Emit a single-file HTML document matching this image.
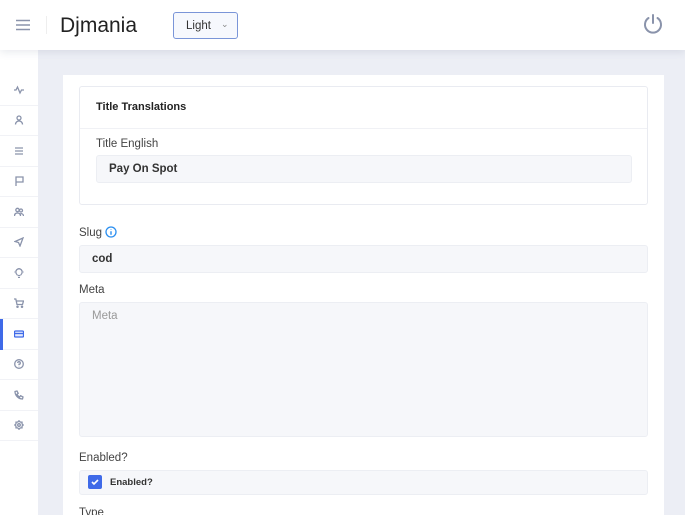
<!DOCTYPE html>
<html style="width:685px;height:515px;overflow:hidden"><head><style>
*{box-sizing:border-box;margin:0;padding:0}
body{width:685px;height:515px;overflow:hidden;background:#eceef5;font-family:"Liberation Sans",sans-serif;color:#343a40;position:relative}
.hdr{position:absolute;left:0;top:0;width:685px;height:50px;background:#fff;box-shadow:0 2px 8px rgba(60,70,110,.12);z-index:2}
.side{position:absolute;left:0;top:50px;width:38px;height:465px;background:#fff}
.it{position:absolute;left:0;width:38px;height:30.5px;border-bottom:1px solid #f1f2f6;display:flex;align-items:center;justify-content:center}
.it svg{width:10px;height:10px;fill:none;stroke:#8a93ab;stroke-width:1.3}
.card{position:absolute;left:63px;top:75px;width:601px;height:440px;background:#fff;overflow:hidden}
.box{position:absolute;left:16px;top:11px;width:569px;height:119px;border:1px solid #e9ebf1;border-radius:3px}
.lbl{position:absolute;font-size:11.5px;color:#444}
.inp{position:absolute;background:#f6f7fa;border:1px solid #eceef3;border-radius:3px;font-size:11.5px;font-weight:bold;color:#333;padding-left:12px;display:flex;align-items:center}
</style></head><body>
<div class="hdr">
 <svg style="position:absolute;left:15px;top:19px" width="16" height="12"><path d="M1 1.5h14M1 6h14M1 10.5h14" stroke="#8a93ab" stroke-width="1.6"/></svg>
 <div style="position:absolute;left:46px;top:16px;width:1px;height:18px;background:#eee"></div>
 <div style="position:absolute;left:60px;top:14px;font-size:21px;color:#222">Djmania</div>
 <div style="position:absolute;left:173px;top:12px;width:65px;height:27px;border:1px solid #7a95d8;border-radius:3px;background:#f6f8fd;font-size:11.5px;color:#333;padding:7px 0 0 12px">Light<span style="position:absolute;left:47px;top:6px;font-size:9px;color:#888">&#8964;</span></div>
 <svg style="position:absolute;left:642px;top:13px" width="22" height="22" viewBox="0 0 22 22"><path d="M6.5 5a8 8 0 1 0 9 0" fill="none" stroke="#8a93ab" stroke-width="2" stroke-linecap="round"/><path d="M11 2v8" stroke="#8a93ab" stroke-width="2" stroke-linecap="round"/></svg>
</div>
<div class="side">
 <div class="it" style="top:25px"><svg viewBox="0 0 10 10"><path d="M0 5h2l1.5-3 2.5 6 1.5-3h2.5"/></svg></div>
 <div class="it" style="top:55.5px"><svg viewBox="0 0 10 10"><circle cx="5" cy="3" r="2"/><path d="M1.5 9.5c0-2 1.5-3.5 3.5-3.5s3.5 1.5 3.5 3.5"/></svg></div>
 <div class="it" style="top:86px"><svg viewBox="0 0 10 10"><path d="M1 2h8M1 5h8M1 8h8"/></svg></div>
 <div class="it" style="top:116.5px"><svg viewBox="0 0 10 10"><path d="M2 10V1h7v5H2"/></svg></div>
 <div class="it" style="top:147px"><svg viewBox="0 0 10 10"><circle cx="3.5" cy="3" r="1.7"/><circle cx="7" cy="3.5" r="1.5"/><path d="M0.5 9c0-2 1.3-3 3-3s3 1 3 3M6.5 6.5c1.8 0 3 1 3 2.5"/></svg></div>
 <div class="it" style="top:177.5px"><svg viewBox="0 0 10 10"><path d="M9 1L1 4.5l3.5 1L6 9z"/></svg></div>
 <div class="it" style="top:208px"><svg viewBox="0 0 10 10"><path d="M3.5 7.5h3M4 9.5h2M3.3 7c-1-1-1.5-1.7-1.5-3a3.2 3.2 0 0 1 6.4 0c0 1.3-.5 2-1.5 3M5 0v.5M0 4h.5M9.5 4h.5"/></svg></div>
 <div class="it" style="top:238.5px"><svg viewBox="0 0 10 10"><path d="M0 1h1.8l1.2 5.5h5.5L9.5 3H2.5"/><circle cx="3.5" cy="8.7" r=".6"/><circle cx="8" cy="8.7" r=".6"/></svg></div>
 <div class="it" style="top:269px"><div style="position:absolute;left:0;top:0;width:3px;height:30.5px;background:#3f6ae8"></div><svg viewBox="0 0 10 10" style="stroke:#3f6ae8;fill:#e3eafd"><rect x="0.5" y="2" width="9" height="6" rx="1"/><path d="M0.5 4.5h9"/></svg></div>
 <div class="it" style="top:299.5px"><svg viewBox="0 0 10 10"><circle cx="5" cy="5" r="4.3"/><path d="M3.7 4a1.3 1.3 0 1 1 1.3 1.3V6.3M5 7.5v.3"/></svg></div>
 <div class="it" style="top:330px"><svg viewBox="0 0 10 10"><path d="M1 1.5L3 1l1.2 2.3-1.3 1c.6 1.2 1.5 2 2.7 2.7l1-1.3L9 7l-.5 2C4.5 9 1 5.5 1 1.5z"/></svg></div>
 <div class="it" style="top:360.5px"><svg viewBox="0 0 10 10"><path d="M5 .8l1.3 1.3h1.7v1.7L9.2 5 8 6.2v1.7H6.3L5 9.2 3.7 7.9H2V6.2L.8 5 2 3.8V2.1h1.7z"/><circle cx="5" cy="5" r="1.3"/></svg></div>
</div>
<div class="card">
 <div class="box">
  <div style="position:absolute;left:0;top:0;width:567px;height:42px;border-bottom:1px solid #f0f1f5;font-size:11px;font-weight:bold;padding:14px 0 0 16px;color:#222">Title Translations</div>
  <div class="lbl" style="left:16px;top:51px">Title English</div>
  <div class="inp" style="left:16px;top:68px;width:536px;height:28px">Pay On Spot</div>
 </div>
 <div class="lbl" style="left:16px;top:152px">Slug</div>
 <svg style="position:absolute;left:42px;top:151px" width="12" height="12" viewBox="0 0 12 12"><circle cx="6" cy="6" r="5" fill="none" stroke="#2b8ff0" stroke-width="1.3"/><path d="M6 5.3v3.5M6 3.3v.4" stroke="#2b8ff0" stroke-width="1.4"/></svg>
 <div class="inp" style="left:16px;top:170px;width:569px;height:28px">cod</div>
 <div class="lbl" style="left:16px;top:209px">Meta</div>
 <div class="inp" style="left:16px;top:227px;width:569px;height:135px;align-items:flex-start;padding-top:7px;font-weight:normal;color:#999">Meta</div>
 <div class="lbl" style="left:16px;top:377px">Enabled?</div>
 <div class="inp" style="left:16px;top:395px;width:569px;height:25px;font-size:9.5px;padding-left:30px">Enabled?</div>
 <div style="position:absolute;left:25px;top:400px;width:14px;height:14px;background:#3f6ae8;border-radius:2px"><svg width="14" height="14"><path d="M4 7l2 2 4-4" stroke="#fff" stroke-width="1.6" fill="none"/></svg></div>
 <div class="lbl" style="left:16px;top:432px">Type</div>
</div>
</body></html>
